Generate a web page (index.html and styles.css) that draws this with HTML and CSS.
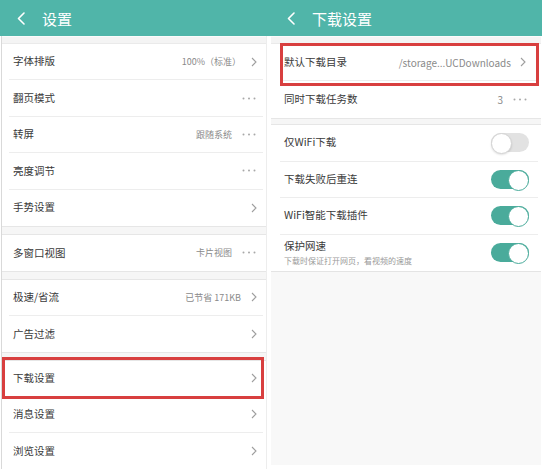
FILE: index.html
```html
<!DOCTYPE html>
<html lang="zh-CN">
<head>
<meta charset="utf-8">
<title>设置</title>
<link rel="stylesheet" href="styles.css">
</head>
<body>
<div class="screen">
  <section class="panel panel-left">
    <header class="bar">
      <svg class="back" width="8" height="13" viewBox="0 0 8 13"><polyline points="7,1 1.5,6.5 7,12"/></svg>
      <h1 class="title">设置</h1>
    </header>
    <div class="body">
      <div class="gap gap-top"></div>
      <ul class="group group-dense">
        <li class="row"><span class="label">字体排版</span><span class="value">100%（标准）</span><svg class="chev" width="6" height="10" viewBox="0 0 6 10"><polyline points="1,1 5,5 1,9"/></svg></li>
        <li class="row"><span class="label">翻页模式</span><svg class="dots" width="14" height="3" viewBox="0 0 14 3"><circle cx="1.5" cy="1.5" r="1"/><circle cx="7" cy="1.5" r="1"/><circle cx="12.5" cy="1.5" r="1"/></svg></li>
        <li class="row"><span class="label">转屏</span><span class="value">跟随系统</span><svg class="dots" width="14" height="3" viewBox="0 0 14 3"><circle cx="1.5" cy="1.5" r="1"/><circle cx="7" cy="1.5" r="1"/><circle cx="12.5" cy="1.5" r="1"/></svg></li>
        <li class="row"><span class="label">亮度调节</span><svg class="dots" width="14" height="3" viewBox="0 0 14 3"><circle cx="1.5" cy="1.5" r="1"/><circle cx="7" cy="1.5" r="1"/><circle cx="12.5" cy="1.5" r="1"/></svg></li>
        <li class="row"><span class="label">手势设置</span><svg class="chev" width="6" height="10" viewBox="0 0 6 10"><polyline points="1,1 5,5 1,9"/></svg></li>
      </ul>
      <div class="gap"></div>
      <ul class="group">
        <li class="row"><span class="label">多窗口视图</span><span class="value">卡片视图</span><svg class="dots" width="14" height="3" viewBox="0 0 14 3"><circle cx="1.5" cy="1.5" r="1"/><circle cx="7" cy="1.5" r="1"/><circle cx="12.5" cy="1.5" r="1"/></svg></li>
      </ul>
      <div class="gap"></div>
      <ul class="group">
        <li class="row"><span class="label">极速/省流</span><span class="value">已节省 171KB</span><svg class="chev" width="6" height="10" viewBox="0 0 6 10"><polyline points="1,1 5,5 1,9"/></svg></li>
        <li class="row"><span class="label">广告过滤</span><svg class="chev" width="6" height="10" viewBox="0 0 6 10"><polyline points="1,1 5,5 1,9"/></svg></li>
      </ul>
      <div class="gap"></div>
      <ul class="group">
        <li class="row"><span class="label">下载设置</span><svg class="chev" width="6" height="10" viewBox="0 0 6 10"><polyline points="1,1 5,5 1,9"/></svg><span class="mark mark-left"></span></li>
        <li class="row"><span class="label">消息设置</span><svg class="chev" width="6" height="10" viewBox="0 0 6 10"><polyline points="1,1 5,5 1,9"/></svg></li>
        <li class="row"><span class="label">浏览设置</span><svg class="chev" width="6" height="10" viewBox="0 0 6 10"><polyline points="1,1 5,5 1,9"/></svg></li>
      </ul>
    </div>
  </section>

  <section class="panel panel-right">
    <header class="bar">
      <svg class="back" width="8" height="13" viewBox="0 0 8 13"><polyline points="7,1 1.5,6.5 7,12"/></svg>
      <h1 class="title">下载设置</h1>
    </header>
    <div class="body">
      <div class="gap gap-top"></div>
      <ul class="group group-first">
        <li class="row"><span class="label">默认下载目录</span><span class="value value-path">/storage...UCDownloads</span><svg class="chev" width="6" height="10" viewBox="0 0 6 10"><polyline points="1,1 5,5 1,9"/></svg><span class="mark mark-right"></span></li>
        <li class="row"><span class="label">同时下载任务数</span><span class="value value-num">3</span><svg class="dots" width="14" height="3" viewBox="0 0 14 3"><circle cx="1.5" cy="1.5" r="1"/><circle cx="7" cy="1.5" r="1"/><circle cx="12.5" cy="1.5" r="1"/></svg></li>
      </ul>
      <div class="gap gap-small"></div>
      <ul class="group group-toggles">
        <li class="row"><span class="label">仅WiFi下载</span><span class="toggle"></span></li>
        <li class="row"><span class="label">下载失败后重连</span><span class="toggle on"></span></li>
        <li class="row"><span class="label">WiFi智能下载插件</span><span class="toggle on"></span></li>
        <li class="row"><span class="label label-stack"><span>保护网速</span><span class="sub">下载时保证打开网页，看视频的速度</span></span><span class="toggle on"></span></li>
      </ul>
    </div>
  </section>
</div>
</body>
</html>
```

FILE: styles.css
```css
* { box-sizing: border-box; }
html, body { margin: 0; padding: 0; background: #fff; }
body { font-family: "Noto Sans CJK SC", "Noto Sans", sans-serif; color: #3a3a3a; }

.screen { display: flex; width: 542px; height: 469px; overflow: hidden; }

.panel { display: flex; flex-direction: column; height: 469px; }
.panel-left { width: 269px; }
.panel-right { width: 273px; }

.bar {
  height: 36px;
  background: #50b5a9;
  display: flex;
  align-items: center;
  flex-shrink: 0;
}
.panel-left .bar { padding-left: 17px; }
.panel-right .bar { padding-left: 18px; }
.back { fill: none; stroke: #fff; stroke-width: 1.6; stroke-linecap: round; stroke-linejoin: round; margin-right: 17px; }
.title { margin: 0; font-size: 15px; font-weight: 400; color: #fff; line-height: 1; }

.body { flex: 1; overflow: hidden; }
.panel-left .body {
  margin: 0 2px 0 1px;
  border-left: 1px solid #d9d9d9;
  border-right: 1px solid #ededed;
}
.panel-right .body {
  margin: 0 1px 0 2px;
  flex: none;
  height: 429px;
  background: #f8f8f8;
}

.gap {
  height: 9px;
  background: #f6f6f6;
  border-top: 1px solid #e6e6e6;
  border-bottom: 1px solid #e6e6e6;
}
.gap-top { height: 8px; background: #f4f4f4; border-top: 1px solid #fbfbfb; border-bottom: 1px solid #eaeaea; }
.gap-small { height: 7px; }

.group { list-style: none; margin: 0; padding: 0; background: #fff; }
.group-toggles { border-bottom: 1px solid #e4e4e4; }

.row {
  position: relative;
  display: flex;
  align-items: center;
  height: 36px;
  margin: 0 3px 0 7px;
  padding: 0 6px 0 4px;
  border-bottom: 1px solid #ededed;
}
.row:last-child { border-bottom: none; }
.group-dense .row { height: 36.4px; }

.panel-right .row { margin: 0 3px 0 9px; padding-right: 12px; }
.group-first .row { height: 37px; }
.group-toggles .row { height: 36.5px; padding-right: 9px; }

.label { flex: 1; font-size: 10.5px; color: #3a3a3a; line-height: 1.2; white-space: nowrap; }
.label-stack { display: flex; flex-direction: column; }
.sub { font-size: 8px; color: #9a9a9a; margin-top: 3px; }

.value { font-size: 9px; color: #8a8a8a; margin-right: 10px; white-space: nowrap; }
.value-path { font-size: 10px; margin-right: 9px; }
.value-num { font-size: 10px; margin-right: 10px; }

.chev { fill: none; stroke: #9e9e9e; stroke-width: 1.1; flex-shrink: 0; }
.dots { fill: #a8a8a8; flex-shrink: 0; margin-right: 1px; }
.panel-right .dots { margin-right: -1px; }

.toggle {
  position: relative;
  width: 38px;
  height: 19px;
  border-radius: 10px;
  background: #e2e2e2;
  flex-shrink: 0;
}
.toggle::after {
  content: "";
  position: absolute;
  top: 0;
  left: 0;
  width: 19px;
  height: 19px;
  border-radius: 50%;
  background: #fff;
  border: 1px solid #d4d4d4;
  box-shadow: 0 1px 2px rgba(0,0,0,0.12);
}
.toggle.on { background: #4aab9b; }
.toggle.on::after {
  left: auto;
  right: 0;
  top: 0;
  border: 1.5px solid #4aab9b;
  box-shadow: none;
}

.mark { position: absolute; border: 3px solid #d83f3f; pointer-events: none; }
.mark-left { left: -7px; right: -1px; top: -4px; bottom: -3px; }
.mark-right { left: 0; right: -1px; top: -1px; bottom: -6px; }
```
